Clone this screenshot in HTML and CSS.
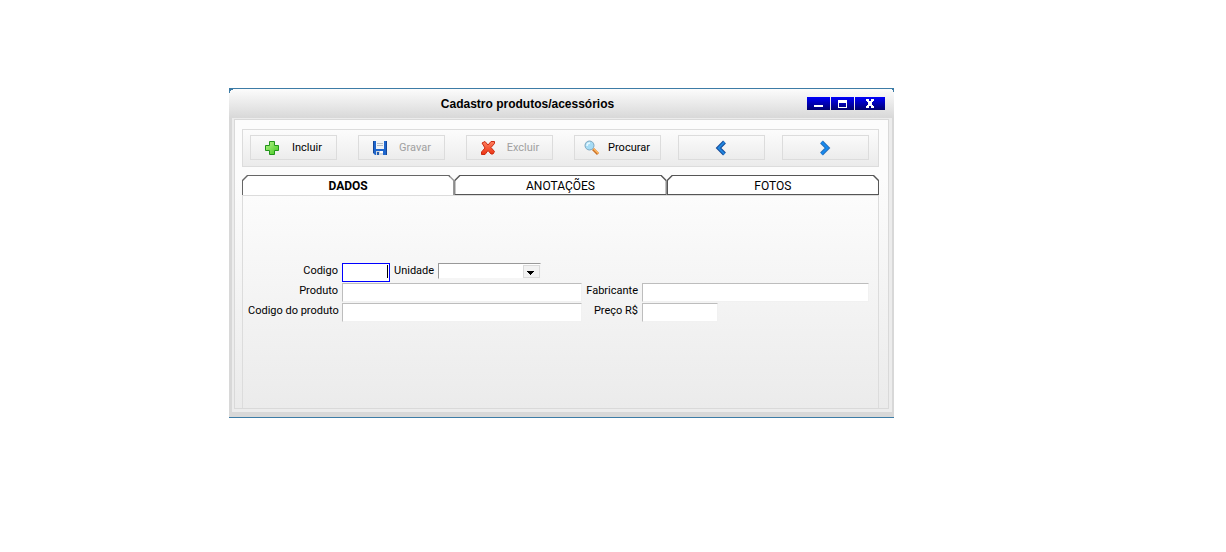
FILE: index.html
```html
<!DOCTYPE html>
<html lang="pt-BR">
<head>
<meta charset="utf-8">
<title>Cadastro produtos/acessórios</title>
<link rel="stylesheet" href="styles.css">
</head>
<body>
<main class="window">
  <header class="titlebar">
    <h1 class="title">Cadastro produtos/acessórios</h1>
    <div class="window-controls">
      <button class="control" type="button" aria-label="Minimizar"><svg width="23" height="13" shape-rendering="crispEdges"><path d="M7 8h9v2H7z" fill="#fff"/></svg></button>
      <button class="control" type="button" aria-label="Maximizar"><svg width="23" height="13" shape-rendering="crispEdges"><path d="M7 3h9v8H7zM8 6v4h7V6z" fill="#fff" fill-rule="evenodd"/></svg></button>
      <button class="control control-close" type="button" aria-label="Fechar"><svg width="30" height="13" shape-rendering="crispEdges"><path d="M11 2h3v2h2V2h3v2h-1v1h-1v3h1v1h1v2h-3V9h-2v2h-3V9h1V8h1V5h-1V4h-1z" fill="#fff"/></svg></button>
    </div>
  </header>
  <div class="frame">
    <div class="content">
      <div class="toolbar" role="toolbar" aria-label="Ações">
        <button class="tool" type="button">
          <svg class="tool-icon" width="16" height="16"><defs><linearGradient id="green" x2="1" y2="1"><stop stop-color="#b8f58c"/><stop offset="1" stop-color="#3fc71c"/></linearGradient></defs><path d="M5.500 1.500h5v4h4v5h-4v4h-5v-4h-4v-5h4z" fill="url(#green)" stroke="#22941a"/></svg>
          <span class="tool-text">Incluir</span>
        </button>
        <button class="tool" type="button" disabled>
          <svg class="tool-icon" width="16" height="16"><path d="M1 1h14v14H3l-2-2z" fill="#1f66cc"/><path d="M1 1h1v12H1zM14 1h1v14h-1z" fill="#174796"/><path d="M4 1h8v8H4z" fill="#f2f4f5"/><path d="M5 3h6v1H5zM5 5h6v1H5z" fill="#b5bbc0"/><path d="M4 11h7v4H4z" fill="#d2d8df"/><path d="M5 12h2v3H5z" fill="#235bac"/><path d="M8 11h3v2H8z" fill="#fff"/></svg>
          <span class="tool-text">Gravar</span>
        </button>
        <button class="tool" type="button" disabled>
          <svg class="tool-icon" width="16" height="16"><defs><linearGradient id="red" x2="0" y2="1"><stop stop-color="#ff8061"/><stop offset="1" stop-color="#ed3210"/></linearGradient></defs><path d="M2 3 5 1.500l3 3.500 3-3.500h3.500v2L11 7.500l3.500 4-1.500 2.500h-2L8 10.500l-3 4H1.500V12L5 8z" fill="url(#red)" stroke="#c92b12" stroke-linejoin="round"/></svg>
          <span class="tool-text">Excluir</span>
        </button>
        <button class="tool tool-search" type="button">
          <svg class="tool-icon" width="16" height="16"><path d="m9 9 5 5" stroke="#ca7228" stroke-width="3"/><path d="m9.500 8.500 5 5" stroke="#ffb861" stroke-width="1.500"/><circle cx="5.500" cy="5.500" r="4.500" fill="#a6dcf5" stroke="#7fa6be"/><path d="M3 6c0-2 1-3 3-3" fill="none" stroke="#e5f8ff" stroke-width="1.500"/></svg>
          <span class="tool-text">Procurar</span>
        </button>
        <button class="tool tool-nav" type="button" aria-label="Anterior"><svg width="16" height="16"><path d="M10.500 2 4.500 8l6 6" fill="none" stroke="#164a98" stroke-width="4"/><path d="M10.500 2 4.500 8l6 6" fill="none" stroke="#2186df" stroke-width="2"/></svg></button>
        <button class="tool tool-nav" type="button" aria-label="Próximo"><svg width="16" height="16"><path d="m3.500 2 6 6-6 6" fill="none" stroke="#286fb9" stroke-width="4"/><path d="m3.500 2 6 6-6 6" fill="none" stroke="#168af0" stroke-width="2"/></svg></button>
      </div>
      <div class="tabs" role="tablist">
        <button class="tab tab-active" type="button" role="tab" aria-selected="true"><span class="tab-text">DADOS</span></button>
        <button class="tab" type="button" role="tab" aria-selected="false"><span class="tab-text">ANOTAÇÕES</span></button>
        <button class="tab" type="button" role="tab" aria-selected="false"><span class="tab-text">FOTOS</span></button>
      </div>
      <form class="form">
        <label class="label" for="codigo">Codigo</label>
        <div class="code-row">
          <span class="code-box"><input class="field field-code" id="codigo" type="text"><span class="caret"></span></span>
          <label class="label label-unit" for="unidade">Unidade</label>
          <span class="select-box"><select class="unit" id="unidade"><option></option></select><svg class="arrow" width="17" height="13" shape-rendering="crispEdges"><rect x=".5" y=".5" width="16" height="12" fill="#f2f2f2" stroke="#dadada"/><path d="M4 6h7v1h-1v1H9v1H8v1H7V9H6V8H5V7H4z"/></svg></span>
        </div>
        <label class="label" for="produto">Produto</label>
        <input class="field" id="produto" type="text">
        <label class="label" for="fabricante">Fabricante</label>
        <input class="field" id="fabricante" type="text">
        <label class="label" for="codigo-produto">Codigo do produto</label>
        <input class="field" id="codigo-produto" type="text">
        <label class="label" for="preco">Preço R$</label>
        <input class="field field-price" id="preco" type="text">
      </form>
    </div>
  </div>
</main>
</body>
</html>
```
FILE: styles.css
```css
* { box-sizing: border-box; }

body {
  margin: 0;
  padding: 88px 332px 88px 229px;
  background: #fff;
  color: #000;
  font: 11px/16px Roboto, "Liberation Sans", sans-serif;
}

button, input, select {
  margin: 0;
  padding: 0;
  border: 0;
  border-radius: 0;
  color: inherit;
  font: inherit;
}

svg { display: block; }

.window {
  position: relative;
  border-top: 1px solid #3d7ca6;
  border-bottom: 1px solid #3d7ca6;
  background: #d8d8d8;
}

/* Corner accents under the top edge */
.window::before,
.window::after {
  content: "";
  position: absolute;
  top: 0;
  width: 4px;
  height: 4px;
  background: #3d7ca6;
}

.window::before {
  left: 0;
  clip-path: polygon(0 0, 100% 0, 100% 1px, 2px 1px, 2px 2px, 1px 2px, 1px 100%, 0 100%);
}

.window::after {
  right: 0;
  clip-path: polygon(2px 0, 100% 0, 100% 3px, 3px 3px, 3px 1px, 2px 1px);
}

.titlebar {
  display: flex;
  align-items: center;
  height: 29px;
  padding: 0 9px 0 19px;
  background: linear-gradient(#fcfcfc, #d8d8d8);
}

.title {
  flex: 1;
  margin: 0;
  font: 700 12px/16px "Liberation Sans", Arial, sans-serif;
  text-align: center;
}

.window-controls {
  display: flex;
  gap: 1px;
}

.control {
  width: 23px;
  height: 13px;
  background: linear-gradient(#0000fa, #00006e);
}

.control-close { width: 30px; }

.frame {
  margin: 0 2px 5px 3px;
  padding: 1px 3px 3px 2px;
  background: #ececec;
}

.content {
  padding: 9px 9px 0 7px;
  border: 1px solid #d9d9d9;
  background: linear-gradient(#fcfcfc 20%, #ebebeb);
}

.toolbar {
  display: grid;
  grid-template-columns: 87fr 21fr 87fr 21fr 87fr 21fr 87fr 17fr 87fr 17fr 87fr;
  padding: 5px 9px 6px 7px;
  border: 1px solid #dcdcdc;
  background: linear-gradient(#fcfcfc, #ebebeb);
}

.tool {
  display: flex;
  align-items: center;
  height: 25px;
  padding-left: 13px;
  border: 1px solid #dcdcdc;
  background: linear-gradient(#fafafa, #ececec);
}

.tool:nth-child(1) { grid-column: 1; }
.tool:nth-child(2) { grid-column: 3; }
.tool:nth-child(3) { grid-column: 5; }
.tool:nth-child(4) { grid-column: 7; }
.tool:nth-child(5) { grid-column: 9; }
.tool:nth-child(6) { grid-column: 11; }

.tool:disabled { color: #a0a0a0; }

.tool-search { padding-left: 9px; }

.tool-icon { flex: none; }

.tool-text {
  flex: 1;
  padding: 1px 2px 0 0;
  text-align: center;
}

.tool-nav {
  justify-content: center;
  padding: 0;
}

.tabs {
  display: grid;
  grid-template-columns: repeat(3, 1fr);
  margin-top: 8px;
}

.tab {
  height: 20px;
  padding: 1px;
  background: #555;
  font-size: 12px;
  clip-path: polygon(0 5px, 5px 0, calc(100% - 5px) 0, 100% 5px, 100% 100%, 0 100%);
}

.tab-text {
  display: block;
  height: 18px;
  line-height: 20px;
  background: #fff;
  clip-path: polygon(0 5px, 5px 0, calc(100% - 5px) 0, 100% 5px, 100% 100%, 0 100%);
}

.tab-active {
  padding-bottom: 0;
  background: linear-gradient(to right, #666 98%, #999 98%);
  font-weight: 700;
}

.tab-active .tab-text { height: 19px; }

.form {
  display: grid;
  grid-template-columns: 91px 240fr 54px 227fr;
  column-gap: 3px;
  row-gap: 1px;
  padding: 67px 9px 86px 5px;
  border: solid #dcdcdc;
  border-width: 1px 1px 0;
  background: linear-gradient(#fcfcfc, #ebebeb);
}

.label {
  padding-right: 1px;
  line-height: 15px;
  text-align: right;
  white-space: nowrap;
}

.label-unit { padding: 0 4px; }

.code-row {
  display: flex;
  grid-column: 2 / -1;
  align-items: flex-start;
}

.code-box, .select-box { position: relative; }

.field {
  display: block;
  width: 100%;
  height: 19px;
  border: 1px solid #f1f1f1;
  border-top-color: #bdbdbd;
  border-left-color: #bdbdbd;
  background: #fff;
  outline: 0;
}

.field-code {
  width: 48px;
  border-color: #00f;
}

.caret {
  position: absolute;
  top: 2px;
  right: 2px;
  width: 1px;
  height: 13px;
  background: #000;
}

.field-price { width: 76px; }

.unit {
  display: block;
  width: 103px;
  height: 16px;
  border: 1px solid #f5f5f5;
  border-top-color: #999;
  border-left-color: #999;
  background: #fff;
  appearance: none;
}

.arrow {
  position: absolute;
  top: 2px;
  right: 1px;
  pointer-events: none;
}
```
